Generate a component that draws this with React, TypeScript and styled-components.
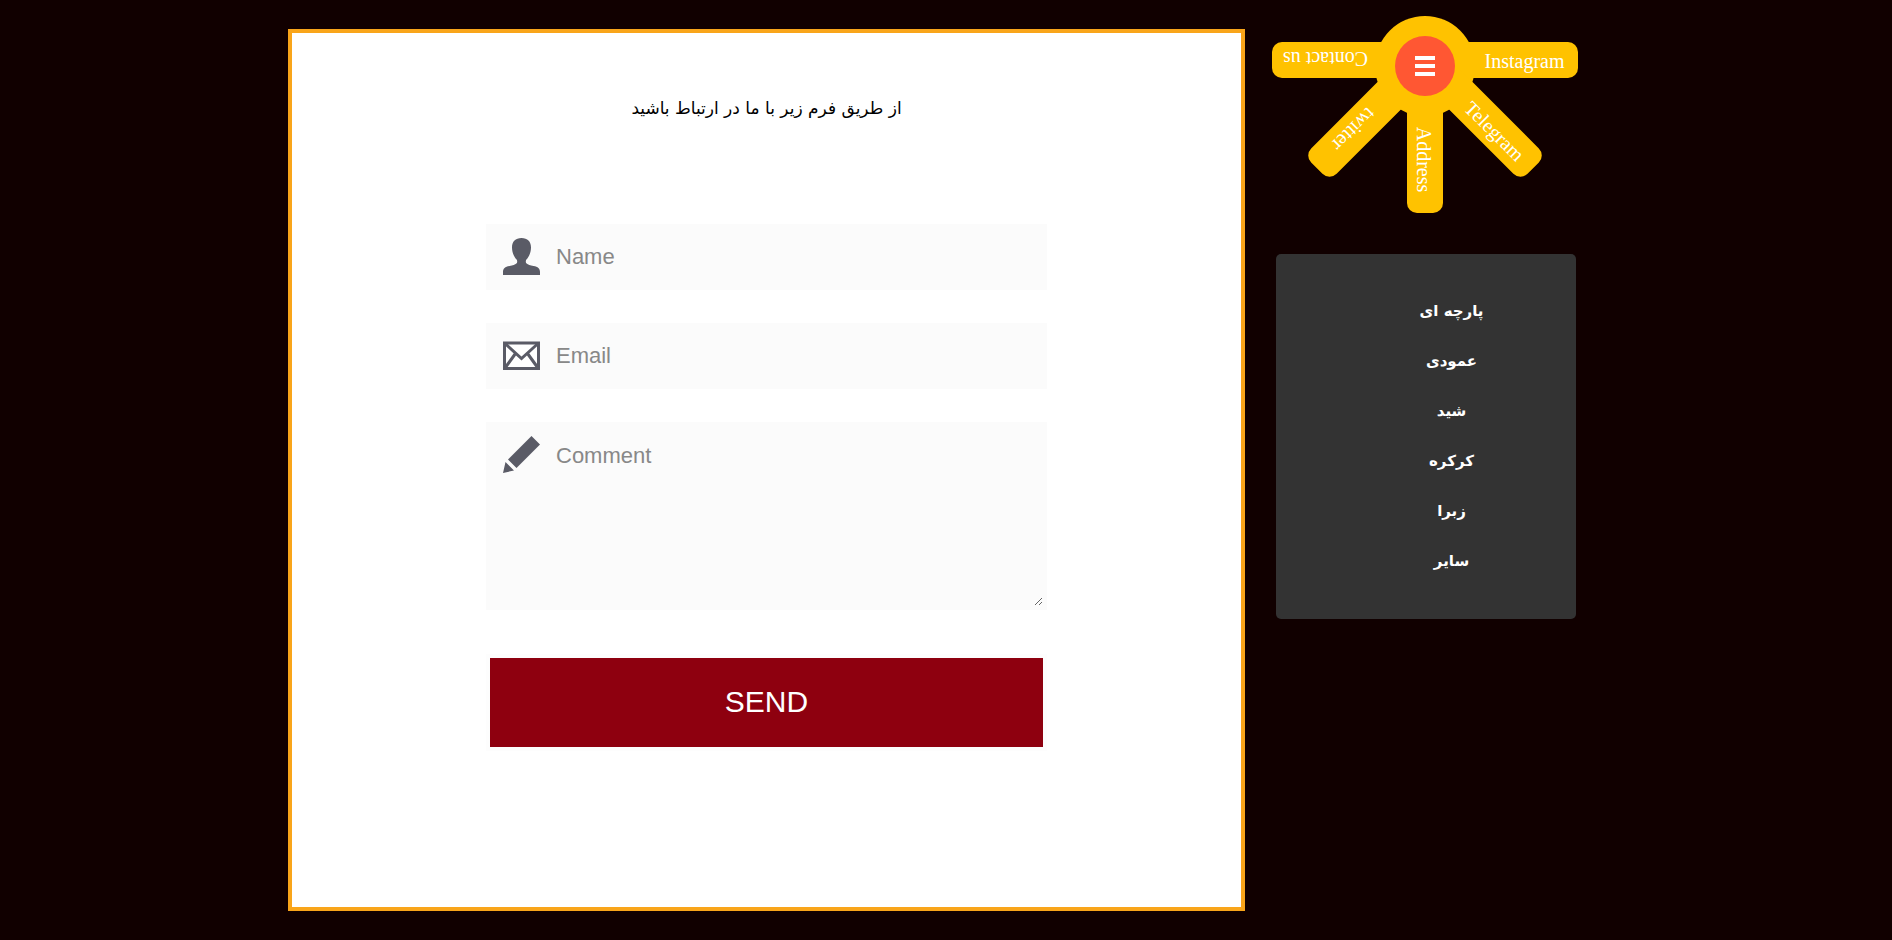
import React from "react";
import styled, { createGlobalStyle } from "styled-components";

const GlobalStyle = createGlobalStyle`
  *, *::before, *::after { box-sizing: border-box; }
  body { margin: 0; background: #110000; }
`;

const persian = `"DejaVu Sans", sans-serif`;
const latin = `"Liberation Sans", Arial, sans-serif`;

const Page = styled.div`
  display: grid;
  grid-template-columns: minmax(16px, 288fr) minmax(0, 957fr) 31px 300px minmax(16px, 316fr);
  align-items: start;
`;

const Card = styled.main`
  grid-column: 2;
  display: flex;
  flex-direction: column;
  align-items: center;
  margin: 29px 0;
  padding: 62px 24px 156px;
  border: 4px solid #f9a51a;
  background: #fff;
`;

const Heading = styled.h1`
  margin: 0 0 103px;
  font: 400 17px/26px ${persian};
  color: #000;
`;

const Form = styled.form`
  display: flex;
  flex-direction: column;
  width: 100%;
  max-width: 561px;
`;

const Field = styled.label<{ $gap: number }>`
  position: relative;
  display: block;
  margin-bottom: ${(p) => p.$gap}px;
`;

const FieldIcon = styled.svg`
  position: absolute;
  left: 17px;
  top: 14px;
  width: 37px;
  height: 37px;
  fill: #5a5b66;
`;

const control = `
  display: block;
  width: 100%;
  margin: 0;
  border: 4px solid #fbfbfb;
  border-radius: 0;
  outline: 0;
  background: #fbfbfb;
  color: #3c3c3c;
  font: 22px/26px ${latin};
  &::placeholder { color: #888; opacity: 1; }
`;

const TextInput = styled.input`
  ${control}
  height: 66px;
  padding: 0 12px 0 66px;
`;

const TextArea = styled.textarea`
  ${control}
  height: 188px;
  padding: 17px 12px 12px 66px;
  resize: vertical;
`;

const SendButton = styled.button`
  height: 97px;
  padding: 0 0 2px;
  border: 4px solid #fdfdfd;
  background: #8e000f;
  color: #fff;
  font: 30px/36px ${latin};
  cursor: pointer;
`;

const Side = styled.aside`
  grid-column: 4;
  display: flex;
  flex-direction: column;
  align-items: center;
  padding-top: 16px;
`;

const Dial = styled.nav`
  position: relative;
  width: 100px;
  height: 100px;
  margin: 0 2px 138px 0;
  border-radius: 50%;
  background: #ffc200;
`;

const Arm = styled.a<{ $angle: number }>`
  position: absolute;
  left: 50px;
  top: 26px;
  width: 153px;
  height: 36px;
  padding: 2px 0 0 46px;
  border-radius: 10px;
  background: #ffc200;
  color: #fff;
  font: 20px/34px "Liberation Serif", "Times New Roman", serif;
  text-align: center;
  text-decoration: none;
  transform-origin: 0 50%;
  transform: rotate(${(p) => p.$angle}deg);
`;

const DialButton = styled.button`
  position: absolute;
  left: 20px;
  top: 20px;
  display: flex;
  align-items: center;
  justify-content: center;
  width: 60px;
  height: 60px;
  padding: 0;
  border: 0;
  border-radius: 50%;
  background: #ff5733;
  cursor: pointer;
`;

const Menu = styled.nav`
  width: 100%;
  padding: 32px 0 33px 51px;
  border-radius: 5px;
  background: #333;
`;

const MenuList = styled.ul`
  margin: 0;
  padding: 0;
  list-style: none;
`;

const MenuLink = styled.a`
  display: block;
  color: #fff;
  font: 700 15px/50px ${persian};
  text-align: center;
  text-decoration: none;
`;

const arms = [
  { label: "Instagram", angle: 0 },
  { label: "Telegram", angle: 45 },
  { label: "Address", angle: 90 },
  { label: "twitter", angle: 135 },
  { label: "Contact us", angle: 180 },
];

const products = ["پارچه ای", "عمودی", "شید", "کرکره", "زبرا", "سایر"];

const UserIcon = () => (
  <FieldIcon viewBox="0 0 37 37" aria-hidden="true">
    <path d="M18.5 0C24.500 0 28 3.500 28 9.500c0 5-2 9.500-4.600 12-.8 1-.9 3 .2 4 1.400 1.300 3.500 2 6.900 2.500C35 28.700 37 30.500 37 34v3H0v-3c0-3.500 2-5.300 6.500-6 3.400-.5 5.500-1.200 6.900-2.500 1.100-1 1-3 .2-4C11 19 9 14.500 9 9.500 9 3.500 12.500 0 18.500 0Z" />
  </FieldIcon>
);

const MailIcon = () => (
  <FieldIcon viewBox="0 0 37 37" aria-hidden="true">
    <g fill="#fff" stroke="#5a5b66" strokeWidth="3">
      <rect x="1.500" y="6" width="34" height="25.500" />
      <path d="M2 6.500 18.500 21.500 35 6.500M2 31 12.500 16.500M35 31 24.500 16.500" fill="none" />
    </g>
  </FieldIcon>
);

const PencilIcon = () => (
  <FieldIcon viewBox="0 0 37 37" aria-hidden="true">
    <path d="M28.500 0 37 8.500 13.500 32 5 23.500ZM2.500 26 11 34.500 0 37Z" />
  </FieldIcon>
);

export default function App() {
  return (
    <>
      <GlobalStyle />
      <Page>
        <Card>
          <Heading dir="rtl" lang="fa">
            از طریق فرم زیر با ما در ارتباط باشید
          </Heading>
          <Form onSubmit={(e) => e.preventDefault()}>
            <Field $gap={33}>
              <UserIcon />
              <TextInput type="text" name="name" placeholder="Name" aria-label="Name" />
            </Field>
            <Field $gap={33}>
              <MailIcon />
              <TextInput type="email" name="email" placeholder="Email" aria-label="Email" />
            </Field>
            <Field $gap={44}>
              <PencilIcon />
              <TextArea name="comment" placeholder="Comment" aria-label="Comment" />
            </Field>
            <SendButton type="submit">SEND</SendButton>
          </Form>
        </Card>
        <Side>
          <Dial>
            {arms.map((arm) => (
              <Arm key={arm.label} href="#" $angle={arm.angle}>
                {arm.label}
              </Arm>
            ))}
            <DialButton type="button" aria-label="Menu">
              <svg width="20" height="20" viewBox="0 0 20 20" fill="#fff" aria-hidden="true">
                <path d="M0 0h20v4H0ZM0 8h20v4H0ZM0 16h20v4H0Z" />
              </svg>
            </DialButton>
          </Dial>
          <Menu>
            <MenuList lang="fa">
              {products.map((name) => (
                <li key={name}>
                  <MenuLink href="#" dir="rtl">
                    {name}
                  </MenuLink>
                </li>
              ))}
            </MenuList>
          </Menu>
        </Side>
      </Page>
    </>
  );
}
